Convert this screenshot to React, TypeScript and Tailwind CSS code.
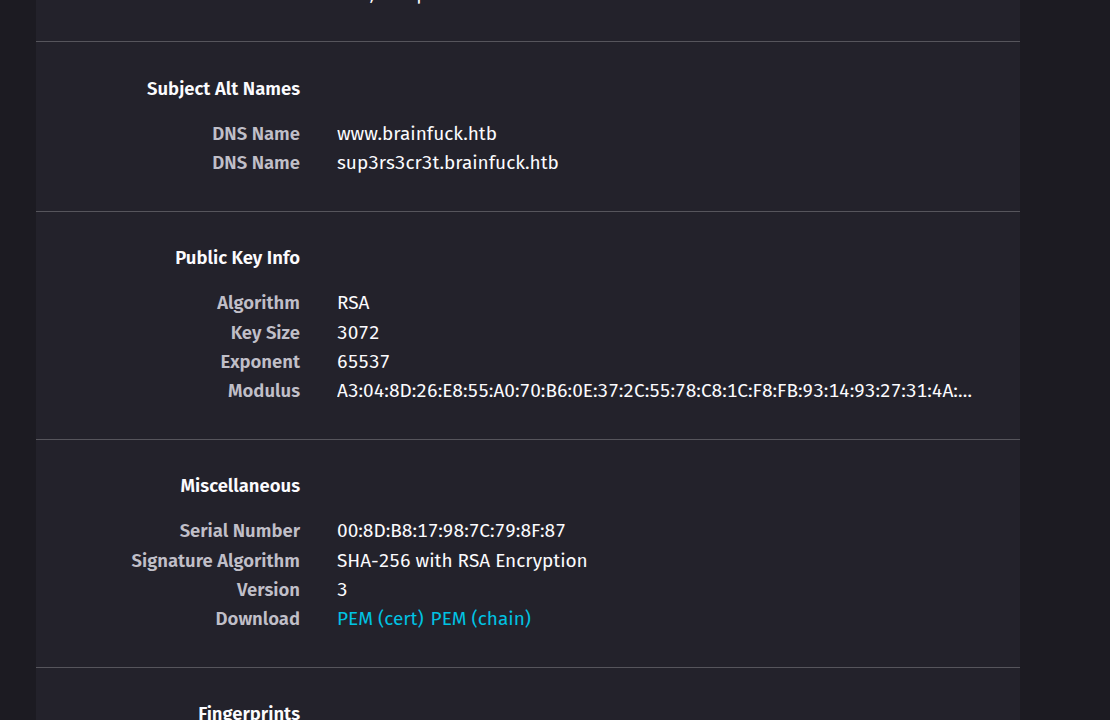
import React from 'react';

interface Row {
  label: string;
  value: string;
  links?: string[];
}

interface Section {
  title: string;
  rows: Row[];
}

const sections: Section[] = [
  {
    title: 'Subject Alt Names',
    rows: [
      { label: 'DNS Name', value: 'www.brainfuck.htb' },
      { label: 'DNS Name', value: 'sup3rs3cr3t.brainfuck.htb' },
    ],
  },
  {
    title: 'Public Key Info',
    rows: [
      { label: 'Algorithm', value: 'RSA' },
      { label: 'Key Size', value: '3072' },
      { label: 'Exponent', value: '65537' },
      {
        label: 'Modulus',
        value:
          'A3:04:8D:26:E8:55:A0:70:B6:0E:37:2C:55:78:C8:1C:F8:FB:93:14:93:27:31:4A:6B:1E:0F:77:2C:DD:90:12',
      },
    ],
  },
  {
    title: 'Miscellaneous',
    rows: [
      { label: 'Serial Number', value: '00:8D:B8:17:98:7C:79:8F:87' },
      { label: 'Signature Algorithm', value: 'SHA-256 with RSA Encryption' },
      { label: 'Version', value: '3' },
      { label: 'Download', value: '', links: ['PEM (cert)', 'PEM (chain)'] },
    ],
  },
];

const InfoRow: React.FC<{ row: Row }> = ({ row }) => (
  <div className="flex items-center h-[29.25px]">
    <div className="w-[264px] shrink-0 text-right text-[18.5px] font-semibold text-[#c0bfc8]">{row.label}</div>
    <div className="ml-[37px] max-w-[642px] truncate text-[19px] tabular-nums text-[#fbfbfe]">
      {row.links ? (
        <span className="flex gap-[7px]">
          {row.links.map((l) => (
            <a key={l} href="#" className="text-[#00c3e3]">
              {l}
            </a>
          ))}
        </span>
      ) : (
        row.value
      )}
    </div>
  </div>
);

export default function App() {
  return (
    <div
      className="flex h-[720px] overflow-hidden bg-[#1c1b22] pl-[36px] leading-[26px]"
      style={{ fontFamily: '"Fira Sans", Lato, "Noto Sans", sans-serif' }}
    >
      <div className="w-[984px] bg-[#23222b]">
        {/* scrolled: last row of the validity section */}
        <div className="-mt-[21px] pb-[33px]">
          <InfoRow row={{ label: 'Not After', value: 'Sun, 23 Apr 2027 11:35:18 GMT' }} />
        </div>

        {sections.map((s) => (
          <div key={s.title} className="border-t border-[#56555c] pt-[32px] pb-[33px]">
            <div className="flex h-[29px] w-[264px] items-center justify-end text-[18.5px] font-semibold text-[#fbfbfe]">
              {s.title}
            </div>
            <div className="mt-[16px]">
              {s.rows.map((r, i) => (
                <InfoRow key={i} row={r} />
              ))}
            </div>
          </div>
        ))}

        <div className="border-t border-[#56555c] pt-[32px]">
          <div className="flex h-[29px] w-[264px] items-center justify-end text-[18.5px] font-semibold text-[#fbfbfe]">
            Fingerprints
          </div>
        </div>
      </div>
    </div>
  );
}
